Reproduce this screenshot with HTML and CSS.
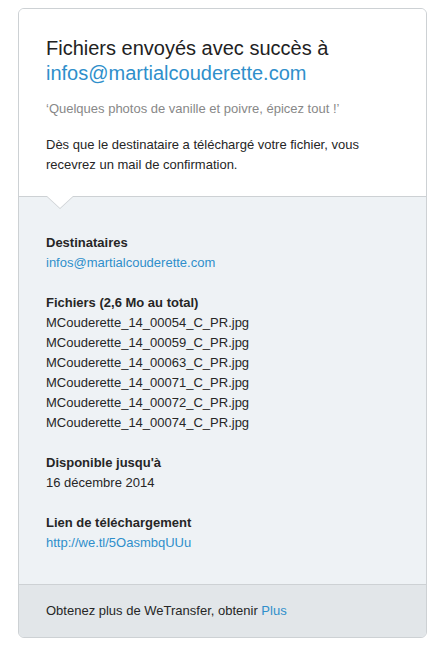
FILE: index.html
```html
<!DOCTYPE html>
<html lang="fr">
<head>
<meta charset="utf-8">
<link rel="stylesheet" href="styles.css">
</head>
<body>
<div class="card">
  <div class="top">
    <h1 class="title">Fichiers envoyés avec succès à <span class="link">infos@martialcouderette.com</span></h1>
    <p class="quote">‘Quelques photos de vanille et poivre, épicez tout !’</p>
    <p class="info">Dès que le destinataire a téléchargé votre fichier, vous recevrez un mail de confirmation.</p>
  </div>
  <div class="details">
    <div class="group">
      <div class="label">Destinataires</div>
      <div class="link">infos@martialcouderette.com</div>
    </div>
    <div class="group">
      <div class="label">Fichiers (2,6 Mo au total)</div>
      <div>MCouderette_14_00054_C_PR.jpg</div>
      <div>MCouderette_14_00059_C_PR.jpg</div>
      <div>MCouderette_14_00063_C_PR.jpg</div>
      <div>MCouderette_14_00071_C_PR.jpg</div>
      <div>MCouderette_14_00072_C_PR.jpg</div>
      <div>MCouderette_14_00074_C_PR.jpg</div>
    </div>
    <div class="group">
      <div class="label">Disponible jusqu'à</div>
      <div>16 décembre 2014</div>
    </div>
    <div class="group">
      <div class="label">Lien de téléchargement</div>
      <div class="link">http://we.tl/5OasmbqUUu</div>
    </div>
  </div>
  <div class="footer">Obtenez plus de WeTransfer, obtenir <span class="link">Plus</span></div>
</div>
</body>
</html>
```
FILE: styles.css
```css
html, body {
  margin: 0;
  padding: 0;
  background: #ffffff;
}
body {
  font-family: "Liberation Sans", Arial, sans-serif;
  font-size: 13px;
  line-height: 20px;
  color: #262626;
  padding: 8px 0 0 18px;
}
.card {
  width: 407px;
  border: 1px solid #cdd1d4;
  border-radius: 6px;
  overflow: hidden;
  background: #eef2f5;
}
.top {
  position: relative;
  background: #ffffff;
  padding: 27px 27px 21px 27px;
  border-bottom: 1px solid #cdd1d4;
}
.top::before,
.top::after {
  content: "";
  position: absolute;
  left: 28px;
  width: 0;
  height: 0;
  border-left: 13px solid transparent;
  border-right: 13px solid transparent;
}
.top::before {
  bottom: -13px;
  border-top: 12px solid #cdd1d4;
}
.top::after {
  bottom: -12px;
  border-top: 12px solid #ffffff;
}
.title {
  margin: 0;
  font-size: 20px;
  line-height: 25px;
  font-weight: normal;
  color: #222;
}
.link {
  color: #2f8fcb;
}
.quote {
  margin: 13px 0 0;
  color: #888888;
}
.info {
  margin: 16px 0 0;
}
.details {
  padding: 36px 27px 31px 27px;
}
.group + .group {
  margin-top: 20px;
}
.label {
  font-weight: bold;
}
.footer {
  background: #e2e6e9;
  border-top: 1px solid #cdd1d4;
  padding: 16px 27px 16px 27px;
}
```
